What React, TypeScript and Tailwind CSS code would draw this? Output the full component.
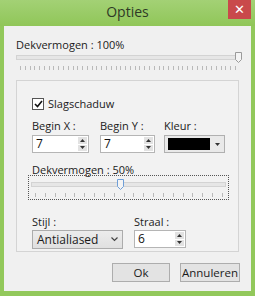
import React from "react";

const font = { fontFamily: '"Open Sans", "Noto Sans", sans-serif' };

const Ticks = ({ width, count }: { width: number; count: number }) => (
  <svg width={width} height={6} className="block">
    {Array.from({ length: count }).map((_, i) => {
      const x = 4 + Math.round((i * (width - 8)) / (count - 1)) + 0.5;
      return <line key={i} x1={x} y1={1} x2={x} y2={5} stroke="#b9b9b9" strokeWidth={1} />;
    })}
  </svg>
);

const Thumb = ({ color }: { color: string }) => (
  <svg width={7} height={11} className="block">
    <path d="M0.5 0.5 H6.5 V7.5 L3.5 10.5 L0.5 7.5 Z" fill="#f4f4f4" stroke={color} />
  </svg>
);

const Slider = ({ width, pos, ticks, thumbColor }: { width: number; pos: number; ticks: number; thumbColor: string }) => (
  <div className="flex flex-col" style={{ width }}>
    <div className="relative h-[11px]">
      <div className="mt-[3px] h-[5px] border border-[#d3d3d3] bg-[#e6e6e6]" />
      <div className="absolute top-0" style={{ left: pos }}>
        <Thumb color={thumbColor} />
      </div>
    </div>
    <div className="mt-[2px]">
      <Ticks width={width} count={ticks} />
    </div>
  </div>
);

const SpinArrows = () => (
  <div className="flex w-[9px] flex-col gap-[1px] py-[1px]">
    <div className="flex flex-1 items-center justify-center bg-[#e2e2e2]">
      <svg width={5} height={3}><path d="M0 3 L2.5 0 L5 3 Z" fill="#333" /></svg>
    </div>
    <div className="flex flex-1 items-center justify-center bg-[#e2e2e2]">
      <svg width={5} height={3}><path d="M0 0 L2.5 3 L5 0 Z" fill="#333" /></svg>
    </div>
  </div>
);

const Spinner = ({ value, width }: { value: string; width: number }) => (
  <div className="flex h-[18px] border border-[#b5b5b5] bg-white pr-[1px]" style={{ width }}>
    <span className="flex-1 pl-[3px] text-[12px] leading-[16px] text-[#111]">{value}</span>
    <SpinArrows />
  </div>
);

export default function App() {
  return (
    <div className="flex h-[296px] w-[255px] flex-col bg-[#92c85b]" style={font}>
      <div className="grid h-[26px] grid-cols-[1fr_auto_1fr] bg-gradient-to-b from-[#a3d175] to-[#90c658]">
        <div />
        <div className="pt-[3px] text-[14px] leading-[18px] text-[#2e3a26]">Opties</div>
        <div className="flex justify-end pr-[4px]">
          <div className="flex h-[19px] w-[23px] items-center justify-center bg-[#c9494b] text-[13px] leading-none text-white">
            ✕
          </div>
        </div>
      </div>
      <div className="mx-[4px] mb-[5px] flex flex-1 flex-col bg-[#f0f0f0] px-[12px] text-[11px] text-[#1b1b1b]">
        <div className="mt-[11px] leading-[15px]">Dekvermogen : 100%</div>
        <div className="mt-[0px]">
          <Slider width={223} pos={219} ticks={46} thumbColor="#9a9a9a" />
        </div>
        <div className="mt-[9px] flex h-[172px] w-[223px] flex-col border border-[#d4d4d4] bg-[#f2f2f2] pl-[15px]">
          <div className="mt-[15px] flex items-center gap-[4px]">
            <div className="flex h-[12px] w-[12px] items-center justify-center border border-[#555] bg-white">
              <svg width={9} height={8}><path d="M1 4 L3.5 6.5 L8 1" fill="none" stroke="#111" strokeWidth={1.6} /></svg>
            </div>
            <span className="leading-[15px]">Slagschaduw</span>
          </div>
          <div className="mt-[7px] flex gap-[11px]">
            <div className="flex flex-col">
              <span className="leading-[15px]">Begin X :</span>
              <div className="mt-[2px]"><Spinner value="7" width={57} /></div>
            </div>
            <div className="flex flex-col">
              <span className="leading-[15px]">Begin Y :</span>
              <div className="mt-[2px]"><Spinner value="7" width={55} /></div>
            </div>
            <div className="ml-[-2px] flex flex-col">
              <span className="leading-[15px]">Kleur :</span>
              <div className="mt-[2px] flex h-[18px] w-[61px] items-center border border-[#b0b0b0] bg-[#e9e9e9] pl-[3px]">
                <div className="h-[12px] w-[42px] bg-black" />
                <div className="flex flex-1 justify-center">
                  <svg width={5} height={3}><path d="M0 0 L2.5 3 L5 0 Z" fill="#333" /></svg>
                </div>
              </div>
            </div>
          </div>
          <div className="mt-[9px] leading-[15px]">Dekvermogen : 50%</div>
          <div className="ml-[-4px] mt-[-2px] w-[201px] border border-dotted border-[#555] px-[2px] pt-[3px] pb-[1px]">
            <Slider width={195} pos={86} ticks={20} thumbColor="#6f9fd8" />
          </div>
          <div className="mt-[14px] flex">
            <div className="flex w-[102px] flex-col">
              <span className="leading-[15px]">Stijl :</span>
              <div className="mt-[1px] flex h-[19px] w-[91px] items-center justify-between border border-[#acacac] bg-gradient-to-b from-[#ececec] to-[#e0e0e0] px-[4px]">
                <span className="text-[12px] leading-[17px]">Antialiased</span>
                <svg width={7} height={5}><path d="M0.5 0.5 L3.5 3.5 L6.5 0.5" fill="none" stroke="#444" strokeWidth={1.2} /></svg>
              </div>
            </div>
            <div className="flex flex-col">
              <span className="leading-[15px]">Straal :</span>
              <div className="mt-[1px]"><Spinner value="6" width={52} /></div>
            </div>
          </div>
        </div>
        <div className="mt-[11px] flex justify-end gap-[10px]">
          <div className="flex h-[19px] w-[58px] items-center justify-center border border-[#adadad] bg-[#e3e3e3] text-[11.5px]">Ok</div>
          <div className="mr-[-1px] flex h-[19px] w-[60px] items-center justify-center border border-[#adadad] bg-[#e3e3e3] text-[11.5px]">Annuleren</div>
        </div>
      </div>
    </div>
  );
}
